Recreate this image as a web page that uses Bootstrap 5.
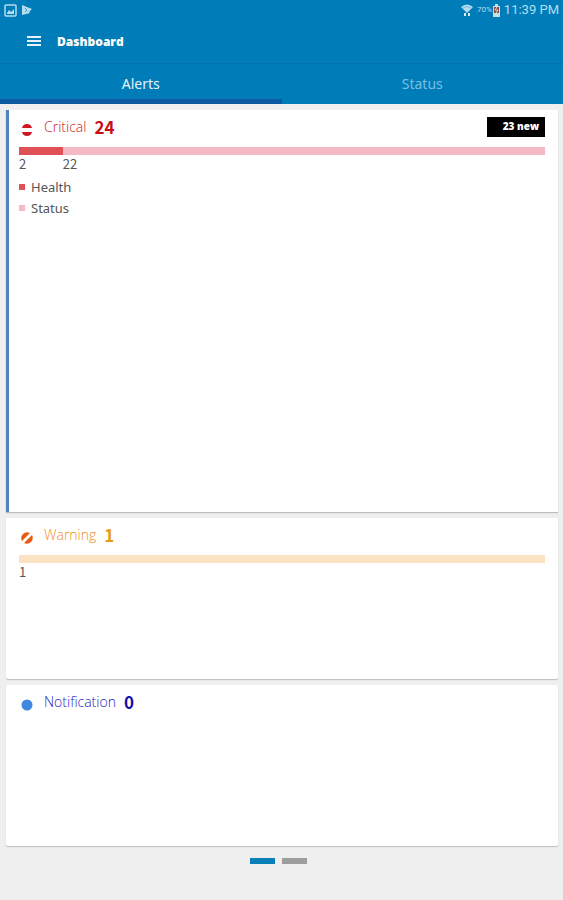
<!DOCTYPE html>
<html lang="en">
<head>
<meta charset="utf-8">
<meta name="viewport" content="width=device-width, initial-scale=1">
<title>Dashboard</title>
<link href="https://cdn.jsdelivr.net/npm/bootstrap@5.3.0/dist/css/bootstrap.min.css" rel="stylesheet">
<style>
body { font-family: "Noto Sans", "Open Sans", sans-serif; background: #efefef; color: #555; font-size: 13px; line-height: 20px; }
.top-area { background: #007db8; }
.device-bar { height: 20px; padding: 0 4px; color: #b5dcef; font-family: Roboto, sans-serif; }
.device-bar .charge { font-size: 8px; }
.device-bar .clock { font-size: 13px; line-height: 20px; }
.app-bar { height: 44px; padding: 0 26px; gap: 15px; border-bottom: 1px solid #0072ac; }
.app-bar h1 { font-family: "Open Sans", sans-serif; font-size: 12px; line-height: 18px; font-weight: 800; }
.tab-row .nav-link { height: 40px; padding: 4px 0 0; border-radius: 0; border-bottom: 5px solid transparent; color: #78bfe3; font-size: 14px; line-height: 32px; }
.tab-row .nav-link.active { color: #e4f3fb; border-bottom-color: #0e5aa2; }
.panels { padding: 6px 5px 0 6px; gap: 6px; }
.panel { border: 0; border-radius: 2px; box-shadow: 0 1px 1px #bdbdbd; padding: 7px 13px; flex: 147 1 0; color: #555; }
.panel-main { flex-grow: 389; border-left: 3px solid #5482bb; padding-left: 10px; border-radius: 0; }
.panel h2 { font-size: 14px; line-height: 20px; font-weight: 300; font-family: "Open Sans", sans-serif; }
.total { font-family: "Noto Sans CJK SC", sans-serif; font-size: 17px; line-height: 20px; font-weight: 700; }
.sign { width: 12px; height: 12px; margin: 7px 11px 0 2px; }
.critical { color: #cc1a25; }
.warning { color: #f09020; }
.notice { color: #2a1dbb; }
.critical .total { color: #c80d18; }
.warning .total { color: #e89a10; }
.notice .total { color: #1510a8; }
.new-tag { background: #000; color: #fff; border-radius: 0; width: 58px; height: 20px; padding: 0 6px; font-size: 10px; line-height: 18px; font-weight: 800; text-align: right; font-family: "Open Sans", sans-serif; }
.meter { height: 8px; margin-top: 10px; border-radius: 0; background: none; }
.fill-health { background: #df5057; }
.fill-status { background: #f4b9c3; }
.fill-warning { background: #fae2c3; }
.counts { font-family: "Noto Sans CJK SC", sans-serif; line-height: 18px; }
.key { gap: 1px; margin-top: 4px; }
.key li { gap: 6px; }
.swatch { width: 6px; height: 6px; }
.pager { height: 54px; padding: 12px 6px 0 0; gap: 7px; }
.pager button { width: 25px; height: 6px; background: #9d9d9d; }
.pager button.current { background: #0a80bb; }
</style>
</head>
<body>
<div class="d-flex flex-column min-vh-100">
  <header class="top-area">
    <div class="device-bar d-flex align-items-center justify-content-between">
      <div class="d-flex align-items-center gap-1">
        <svg width="13" height="13" viewBox="0 0 13 13" fill="none" stroke="#b5dcef" aria-hidden="true"><rect x="1" y="1" width="11" height="11" rx="1" stroke-width="1.5"/><path d="M3 9l2-3 2 2 3-3v5H3z" fill="#b5dcef" stroke="none"/></svg>
        <svg width="12" height="12" viewBox="0 0 12 12" aria-hidden="true"><path d="M1 1l10 4-3 3 1 1-8 2z" fill="#b5dcef"/><path d="M4 4l2 2-2 2" fill="none" stroke="#3f9cc9"/></svg>
      </div>
      <div class="d-flex align-items-center">
        <svg class="me-1" width="12" height="13" viewBox="0 0 12 13" aria-hidden="true"><path d="M0 3Q6-2 12 3L6 9z" fill="#b5dcef"/><path d="M2 4q4-3 8 0" fill="none" stroke="#7abbdc"/><path d="M4 9v3M8 9v3" stroke="#d9edf6" stroke-width="2"/></svg>
        <span class="charge">70%</span>
        <svg class="me-1" width="8" height="13" viewBox="0 0 8 13" aria-hidden="true"><path d="M3 0h3v2h2v11H1V2h2z" fill="#c9dfe8"/><path d="M2 3h5v6H2z" fill="#8b4b46"/><path d="M5 3L3 6h3L4 9" stroke="#e8cfcc" fill="none"/></svg>
        <span class="clock">11:39 PM</span>
      </div>
    </div>
    <div class="app-bar d-flex align-items-center text-white">
      <button class="btn p-0 border-0 d-flex" type="button" aria-label="Open menu">
        <svg width="16" height="14" viewBox="0 0 16 14" stroke="#e4f3fb" stroke-width="2" aria-hidden="true"><path d="M1 2h14M1 6h14M1 10h14"/></svg>
      </button>
      <h1 class="m-0">Dashboard</h1>
    </div>
    <nav class="tab-row nav nav-fill row g-0">
      <a class="nav-link active col-6" aria-current="page" href="#alerts">Alerts</a>
      <a class="nav-link col-6" href="#status">Status</a>
    </nav>
  </header>
  <main id="alerts" class="panels d-flex flex-column flex-grow-1">
    <section class="panel panel-main card">
      <div class="critical d-flex align-items-start">
        <svg class="sign" viewBox="0 0 12 12" aria-hidden="true"><path d="M1 4Q2 0 6 0t5 4zM1 8h10q-1 4-5 4T1 8z" fill="#cf1722"/></svg>
        <h2 class="m-0">Critical</h2><span class="total ms-2">24</span>
        <span class="badge new-tag ms-auto">23 new</span>
      </div>
      <div class="progress meter">
        <div class="fill-health" style="width: 8.33%"></div>
        <div class="fill-status" style="width: 91.67%"></div>
      </div>
      <div class="counts d-flex"><span style="width: 8.33%">2</span><span>22</span></div>
      <ul class="key list-unstyled d-flex flex-column mb-0">
        <li class="d-flex align-items-center"><span class="swatch fill-health"></span>Health</li>
        <li class="d-flex align-items-center"><span class="swatch fill-status"></span>Status</li>
      </ul>
    </section>
    <section class="panel card">
      <div class="warning d-flex align-items-start">
        <svg class="sign" viewBox="0 0 12 12" aria-hidden="true"><path d="M1 9Q-1 5 2 2t7-1zM3 11l8-8q2 4-1 7t-7 1z" fill="#e85a14"/></svg>
        <h2 class="m-0">Warning</h2><span class="total ms-2">1</span>
      </div>
      <div class="progress meter"><div class="fill-warning w-100"></div></div>
      <div class="counts">1</div>
    </section>
    <section class="panel card">
      <div class="notice d-flex align-items-start">
        <svg class="sign" viewBox="0 0 12 12" aria-hidden="true"><circle cx="6" cy="6" r="5.5" fill="#3f87df"/></svg>
        <h2 class="m-0">Notification</h2><span class="total ms-2">0</span>
      </div>
    </section>
  </main>
  <footer class="pager d-flex justify-content-center align-items-start">
    <button class="btn p-0 border-0 rounded-0 current" type="button" aria-label="Page 1"></button>
    <button class="btn p-0 border-0 rounded-0" type="button" aria-label="Page 2"></button>
  </footer>
</div>
<script src="https://cdn.jsdelivr.net/npm/bootstrap@5.3.0/dist/js/bootstrap.bundle.min.js"></script>
</body>
</html>
